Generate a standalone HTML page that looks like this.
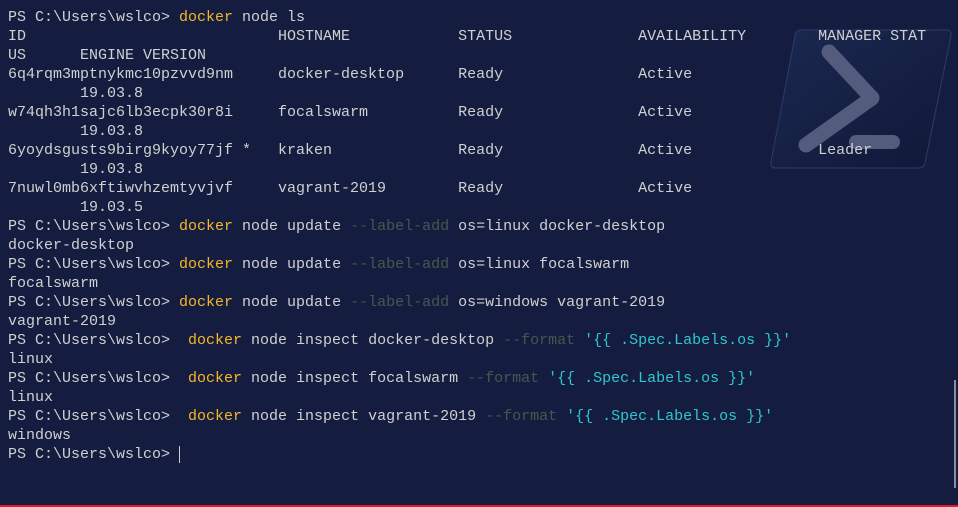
<!DOCTYPE html>
<html><head><meta charset="utf-8"><style>
html,body{margin:0;padding:0;}
body{width:958px;height:507px;background:#141d40;overflow:hidden;position:relative;}
pre{position:absolute;left:8px;top:8px;margin:0;font-family:"Liberation Mono",monospace;font-size:15px;line-height:19px;color:#d0d0d0;white-space:pre;z-index:2;}
.y{color:#f5b626}.g{color:#44584c}.c{color:#2fc6cf}
svg{position:absolute;left:0;top:0;z-index:1}
.sb{position:absolute;left:954px;top:380px;width:2px;height:108px;background:#8a8e9c;}
.red{position:absolute;left:0;top:505px;width:958px;height:2px;background:#e8192c;}
</style></head><body>
<svg width="958" height="507">
<defs><linearGradient id="lg" x1="0" y1="0" x2="1" y2="1"><stop offset="0" stop-color="#1a2850"/><stop offset="1" stop-color="#101838"/></linearGradient></defs>
<path d="M801 30 L946 30 Q952 30 951 36 L925 163 Q924 168 918 168 L776 168 Q770 168 771 162 L795 36 Q796 30 801 30 Z" fill="url(#lg)" stroke="#2c3b6a" stroke-width="1"/>
<polyline points="829,52 872,98 806,145" fill="none" stroke="#535c7d" stroke-width="15" stroke-linecap="round" stroke-linejoin="round"/>
<line x1="856" y1="142" x2="893" y2="142" stroke="#535c7d" stroke-width="14" stroke-linecap="round"/>
</svg>
<pre>PS C:\Users\wslco&gt; <span class="y">docker</span> node ls
ID                            HOSTNAME            STATUS              AVAILABILITY        MANAGER STAT
US      ENGINE VERSION
6q4rqm3mptnykmc10pzvvd9nm     docker-desktop      Ready               Active
        19.03.8
w74qh3h1sajc6lb3ecpk30r8i     focalswarm          Ready               Active
        19.03.8
6yoydsgusts9birg9kyoy77jf *   kraken              Ready               Active              Leader
        19.03.8
7nuwl0mb6xftiwvhzemtyvjvf     vagrant-2019        Ready               Active
        19.03.5
PS C:\Users\wslco&gt; <span class="y">docker</span> node update <span class="g">--label-add</span> os=linux docker-desktop
docker-desktop
PS C:\Users\wslco&gt; <span class="y">docker</span> node update <span class="g">--label-add</span> os=linux focalswarm
focalswarm
PS C:\Users\wslco&gt; <span class="y">docker</span> node update <span class="g">--label-add</span> os=windows vagrant-2019
vagrant-2019
PS C:\Users\wslco&gt;  <span class="y">docker</span> node inspect docker-desktop <span class="g">--format</span> <span class="c">'{{ .Spec.Labels.os }}'</span>
linux
PS C:\Users\wslco&gt;  <span class="y">docker</span> node inspect focalswarm <span class="g">--format</span> <span class="c">'{{ .Spec.Labels.os }}'</span>
linux
PS C:\Users\wslco&gt;  <span class="y">docker</span> node inspect vagrant-2019 <span class="g">--format</span> <span class="c">'{{ .Spec.Labels.os }}'</span>
windows
PS C:\Users\wslco&gt; <span style="border-left:1px solid #d0d0d0"> </span></pre>
<div class="sb"></div>
<div class="red"></div>
</body></html>
